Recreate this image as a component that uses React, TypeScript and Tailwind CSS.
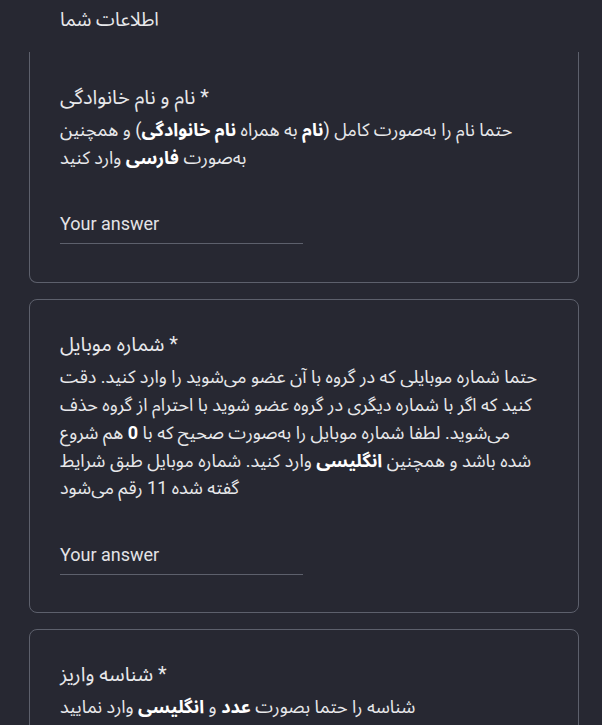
import React from 'react';

const Z = '\u200c';

type Seg = [string, boolean?];

const cards: { title: string; lines: Seg[][]; answer: boolean; first?: boolean }[] = [
  {
    title: 'نام و نام خانوادگی *',
    first: true,
    answer: true,
    lines: [
      [['حتما نام را به' + Z + 'صورت کامل ('], ['نام', true], [' به همراه '], ['نام خانوادگی', true], [') و همچنین']],
      [['به' + Z + 'صورت '], ['فارسی', true], [' وارد کنید']],
    ],
  },
  {
    title: 'شماره موبایل *',
    answer: true,
    lines: [
      [['حتما شماره موبایلی که در گروه با آن عضو می' + Z + 'شوید را وارد کنید. دقت']],
      [['کنید که اگر با شماره دیگری در گروه عضو شوید با احترام از گروه حذف']],
      [['می' + Z + 'شوید. لطفا شماره موبایل را به' + Z + 'صورت صحیح که با '], ['0', true], [' هم شروع']],
      [['شده باشد و همچنین '], ['انگلیسی', true], [' وارد کنید. شماره موبایل طبق شرایط']],
      [['گفته شده 11 رقم می' + Z + 'شود']],
    ],
  },
  {
    title: 'شناسه واریز *',
    answer: false,
    lines: [[['شناسه را حتما بصورت '], ['عدد', true], [' و '], ['انگلیسی', true], [' وارد نمایید']]],
  },
];

export default function App() {
  return (
    <div
      className="h-[725px] w-[602px] overflow-hidden bg-[#272832] text-[#e8e8eb]"
      style={{ fontFamily: 'Roboto, "Noto Sans Arabic", "Noto Sans", "DejaVu Sans", sans-serif' }}
    >
      <div className="h-[52px] pl-[60px] pt-[6px] text-[19px] leading-[28px]">اطلاعات شما</div>

      <div className="flex flex-col gap-[16px]">
        {cards.map((card, i) => (
          <div
            key={i}
            className={`ml-[29px] w-[550px] border-[#5d606c] px-[30px] ${
              card.first ? 'rounded-b-lg border-x border-b pt-[31px] pb-[38px]' : 'rounded-lg border pt-[30px] pb-[37px]'
            }`}
          >
            <div className="text-[20px] leading-[28px]">{card.title}</div>
            <div className="mt-[5px] text-[18px] leading-[27.7px]">
              {card.lines.map((line, j) => (
                <div key={j} className="whitespace-nowrap">
                  {line.map(([t, b], k) => (
                    <span key={k} className={b ? 'font-bold text-white' : ''}>
                      {t}
                    </span>
                  ))}
                </div>
              ))}
            </div>
            {card.answer && (
              <div className="mt-[41px] w-[243px] border-b border-[#5d606c] pb-[7px] text-[18px] leading-[24px] text-[#e3e3e6]">
                Your answer
              </div>
            )}
          </div>
        ))}
      </div>
    </div>
  );
}
